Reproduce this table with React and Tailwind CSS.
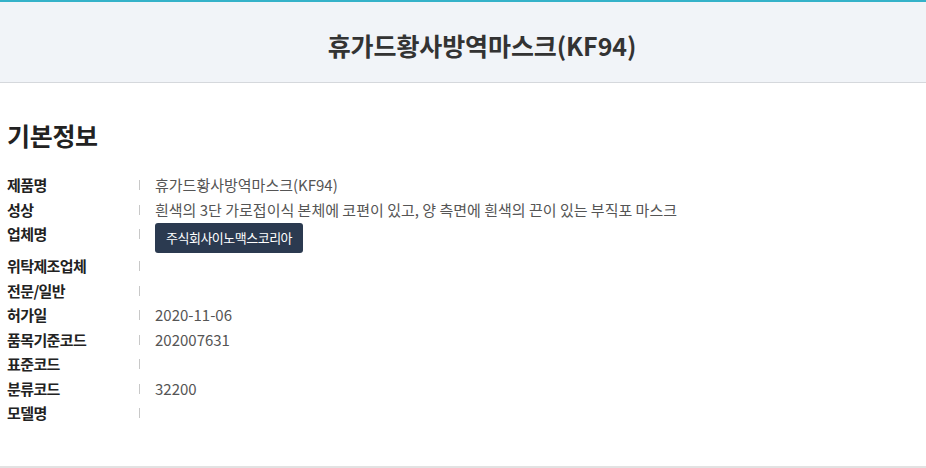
const rows = [
  { label: '제품명', value: '휴가드황사방역마스크(KF94)' },
  { label: '성상', value: '흰색의 3단 가로접이식 본체에 코편이 있고, 양 측면에 흰색의 끈이 있는 부직포 마스크' },
  { label: '업체명', button: '주식회사이노맥스코리아' },
  { label: '위탁제조업체' },
  { label: '전문/일반' },
  { label: '허가일', value: '2020-11-06' },
  { label: '품목기준코드', value: '202007631' },
  { label: '표준코드' },
  { label: '분류코드', value: '32200' },
  { label: '모델명' },
]

export default function App() {
  return (
    <div className="min-h-[468px] bg-white font-['Noto_Sans_CJK_KR','Noto_Sans',sans-serif]">
      <header className="h-[83px] border-t-2 border-[#35b2c9] border-b border-b-[#d5d8dc] bg-[#f1f4f8] flex items-center justify-center pt-[8px] pl-[38px]">
        <h1 className="text-[25px] font-bold text-[#333] tracking-[-0.1px]">휴가드황사방역마스크(KF94)</h1>
      </header>

      <section className="px-[7px] pt-[36px] pb-[40px] border-b-2 border-[#e2e2e2]">
        <h2 className="text-[25px] font-bold text-[#222] leading-[32px] tracking-[-0.3px]">기본정보</h2>

        <dl className="mt-[22px]">
          {rows.map(r => (
            <div key={r.label} className="flex">
              <dt className="w-[132px] shrink-0 text-[15px] font-bold text-[#222] leading-[24.5px] tracking-[-0.6px]">
                {r.label}
              </dt>
              <span className="mt-[7px] h-[10px] w-px bg-[#c8c8c8] shrink-0" />
              <dd className="pl-[15px] text-[15px] text-[#555] leading-[24.5px]">
                {r.button ? (
                  <button className="mt-[1px] mb-[1px] h-[30px] px-[11px] rounded-[3px] bg-[#2b3a50] text-white text-[13px] tracking-[-0.5px]">
                    {r.button}
                  </button>
                ) : (
                  r.value
                )}
              </dd>
            </div>
          ))}
        </dl>
      </section>
    </div>
  )
}
